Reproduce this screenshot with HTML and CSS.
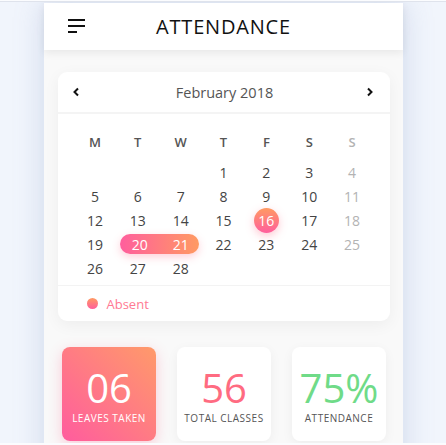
FILE: index.html
```html
<!DOCTYPE html>
<html lang="en">
<head>
<meta charset="utf-8">
<title>Attendance</title>
<link rel="stylesheet" href="styles.css">
</head>
<body>
<div class="stage">
  <div class="phone">
    <header class="topbar">
      <svg class="menu" width="18" height="15" viewBox="0 0 18 15">
        <rect x="0" y="1" width="17" height="2" fill="#111"/>
        <rect x="0" y="7" width="17" height="2" fill="#111"/>
        <rect x="0" y="13" width="9" height="2" fill="#111"/>
      </svg>
      <h1 class="title">ATTENDANCE</h1>
    </header>
    <main class="content">
      <section class="calendar">
        <div class="cal-head">
          <svg class="chev" width="8" height="10" viewBox="0 0 8 10"><path d="M6 1.5 L2.5 5 L6 8.5" fill="none" stroke="#111" stroke-width="2"/></svg>
          <span class="month">February 2018</span>
          <svg class="chev" width="8" height="10" viewBox="0 0 8 10"><path d="M2 1.5 L5.5 5 L2 8.5" fill="none" stroke="#111" stroke-width="2"/></svg>
        </div>
        <div class="grid">
          <span class="wd">M</span><span class="wd">T</span><span class="wd">W</span><span class="wd">T</span><span class="wd">F</span><span class="wd">S</span><span class="wd sun">S</span>

          <span class="d"></span><span class="d"></span><span class="d"></span><span class="d">1</span><span class="d">2</span><span class="d">3</span><span class="d sun">4</span>
          <span class="d">5</span><span class="d">6</span><span class="d">7</span><span class="d">8</span><span class="d">9</span><span class="d">10</span><span class="d sun">11</span>
          <span class="d">12</span><span class="d">13</span><span class="d">14</span><span class="d">15</span><span class="d"><span class="dot-day">16</span></span><span class="d">17</span><span class="d sun">18</span>
          <span class="d">19</span><span class="d range"><span class="pill"><span>20</span><span>21</span></span></span><span class="d">22</span><span class="d">23</span><span class="d">24</span><span class="d sun">25</span>
          <span class="d">26</span><span class="d">27</span><span class="d">28</span><span class="d"></span><span class="d"></span><span class="d"></span><span class="d"></span>
        </div>
        <div class="legend">
          <span class="legend-dot"></span>
          <span class="legend-text">Absent</span>
        </div>
      </section>
      <section class="stats">
        <div class="stat hot">
          <span class="num">06</span>
          <span class="lbl">LEAVES TAKEN</span>
        </div>
        <div class="stat">
          <span class="num pink">56</span>
          <span class="lbl">TOTAL CLASSES</span>
        </div>
        <div class="stat">
          <span class="num green">75%</span>
          <span class="lbl">ATTENDANCE</span>
        </div>
      </section>
    </main>
  </div>
</div>
</body>
</html>
```
FILE: styles.css
```css
html, body {
  margin: 0;
  padding: 0;
  background: #fbfcfe;
}
body {
  font-family: "Open Sans", "Noto Sans", sans-serif;
  width: 446px;
  height: 445px;
  overflow: hidden;
}
.stage {
  height: 442px;
  padding-top: 1px;
  box-sizing: border-box;
  background: #f1f5fc;
  overflow: hidden;
  border-top: 1px solid #dfe3ec;
  margin-top: 1px;
}
.phone {
  width: 359px;
  margin: 0 auto;
  height: 500px;
  background: #f9f9f9;
  box-shadow: 0 0 28px rgba(120, 140, 190, 0.28);
}
.topbar {
  height: 47px;
  background: #fff;
  display: flex;
  align-items: center;
  position: relative;
  box-shadow: 0 3px 8px rgba(0, 0, 0, 0.07);
  z-index: 1;
}
.menu {
  position: absolute;
  left: 24px;
  top: 15px;
}
.title {
  margin: 0;
  width: 100%;
  text-align: center;
  font-weight: 400;
  font-size: 20px;
  letter-spacing: 0.8px;
  color: #111;
  padding-left: 1px;
}
.content {
  padding: 22px 13px 0 14px;
}
.calendar {
  background: #fff;
  border-radius: 9px;
  box-shadow: 0 4px 16px rgba(0, 0, 0, 0.05);
}
.cal-head {
  height: 40px;
  display: flex;
  align-items: center;
  justify-content: space-between;
  padding: 0 16px 0 14px;
  border-bottom: 2px solid #f4f4f4;
}
.month {
  font-size: 14.5px;
  color: #555;
  padding-left: 4px;
}
.grid {
  display: grid;
  grid-template-columns: repeat(7, 1fr);
  grid-template-rows: 30px;
  grid-auto-rows: 24px;
  padding: 16px 16px 5px;
  border-bottom: 1px solid #f3f3f3;
}
.wd {
  display: flex;
  align-items: center;
  justify-content: center;
  font-size: 13px;
  font-weight: 600;
  color: #555;
  padding-bottom: 6px;
}
.d {
  display: flex;
  align-items: center;
  justify-content: center;
  font-size: 14px;
  color: #444;
}
.sun {
  color: #b3b3b3;
}
.dot-day {
  width: 25px;
  height: 25px;
  border-radius: 50%;
  background: linear-gradient(to bottom, #ff9a62, #ff5e9d);
  color: #fff;
  display: flex;
  align-items: center;
  justify-content: center;
  box-shadow: 0 3px 8px rgba(255, 100, 130, 0.35);
}
.range {
  grid-column: span 2;
}
.pill {
  width: 79px;
  height: 20px;
  border-radius: 10px;
  background: linear-gradient(to right, #ff5e9d, #ff9a62);
  color: #fff;
  display: flex;
  justify-content: space-between;
  align-items: center;
  padding: 0 10px 0 12px;
  box-sizing: border-box;
  box-shadow: 0 3px 8px rgba(255, 100, 130, 0.3);
}
.legend {
  height: 35px;
  display: flex;
  align-items: center;
  padding-left: 29px;
  gap: 9px;
}
.legend-dot {
  width: 11px;
  height: 11px;
  border-radius: 50%;
  background: linear-gradient(to bottom, #ff9a62, #ff5e9d);
}
.legend-text {
  font-size: 13px;
  color: #ff7a93;
}
.stats {
  display: flex;
  justify-content: center;
  gap: 21px;
  margin-top: 26px;
  padding-left: 1px;
}
.stat {
  width: 94px;
  height: 94px;
  background: #fff;
  border-radius: 8px;
  box-shadow: 0 3px 12px rgba(0, 0, 0, 0.05);
  display: flex;
  flex-direction: column;
  align-items: center;
  padding-top: 23px;
  box-sizing: border-box;
}
.stat.hot {
  background: linear-gradient(to top right, #ff5c9e, #ff9a6a);
  box-shadow: 0 4px 14px rgba(255, 100, 140, 0.3);
}
.num {
  font-size: 40px;
  line-height: 36px;
  font-weight: 400;
  color: #fff;
}
.num.pink {
  color: #ff6b81;
}
.num.green {
  color: #6fdb88;
}
.lbl {
  font-size: 10px;
  line-height: 12px;
  letter-spacing: 0.5px;
  color: #555;
  margin-top: 6px;
}
.hot .lbl {
  color: #fff;
}
```
